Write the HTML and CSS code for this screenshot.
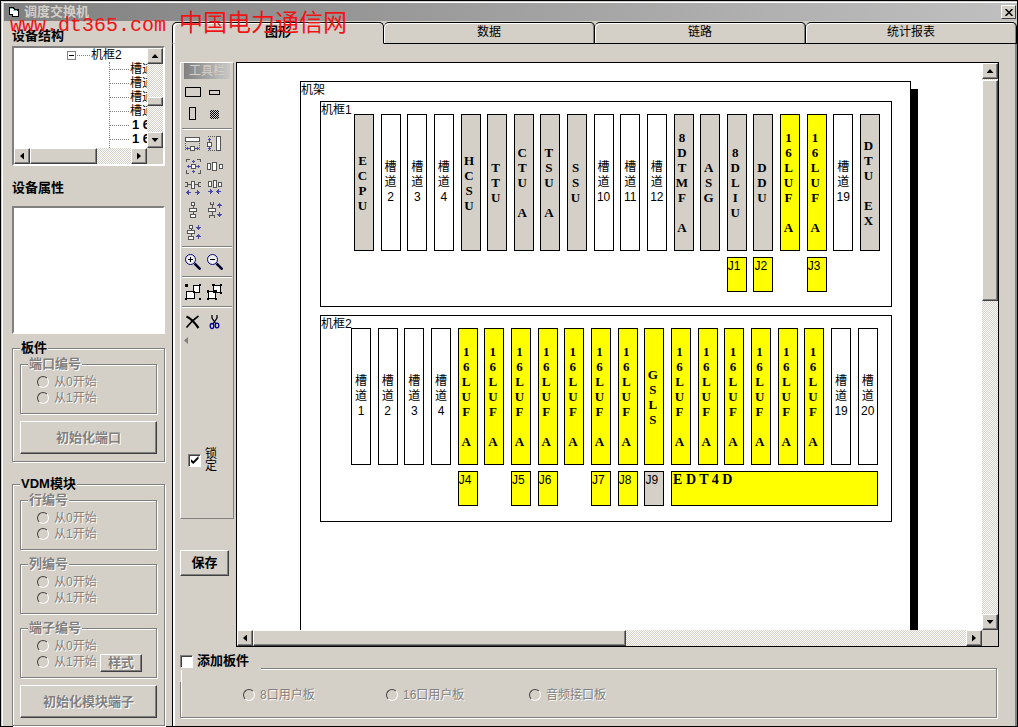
FILE: index.html
```html
<!DOCTYPE html>
<html lang="zh-CN">
<head>
<meta charset="utf-8">
<title>调度交换机</title>
<link rel="stylesheet" href="styles.css">
</head>
<body>
<div class="window">
  <header class="titlebar">
    <svg class="app-icon" viewBox="0 0 12 12" shape-rendering="crispEdges"><path d="M1 1h5v1h1v1h4v8H4V9H1z" fill="#000"/><path d="M2 3h4v5H2zM5 5h5v5H5z" fill="#fff"/><path d="M2 2h3v1H2zM5 4h4v1H5z" fill="#7fc4c4"/></svg>
    <h1 class="title">调度交换机</h1>
    <button class="close" type="button" aria-label="关闭"><svg width="8" height="7" viewBox="0 0 8 7"><path d="M.5 0l7 7M7.500 0l-7 7" stroke="#000" stroke-width="1.500"/></svg></button>
  </header>
  <p class="watermark"><span>www.dt365.com</span><span class="watermark-cn">中国电力通信网</span></p>

  <div class="body">
    <aside class="sidebar">
      <h2 class="heading">设备结构</h2>
      <div class="tree">
        <div class="tree-view">
          <div class="tree-root"><span class="toggle"></span><span class="dots"></span><span>机框2</span></div>
          <ul class="tree-list">
            <li>槽道1</li><li>槽道2</li><li>槽道3</li><li>槽道4</li>
            <li class="card">1 6 L U F</li><li class="card">1 6 L U F</li><li class="card">1 6 L U F</li>
          </ul>
        </div>
        <div class="vbar"><button class="arrow up" type="button" aria-label="向上"></button><div class="thumb tree-vthumb"></div><button class="arrow down" type="button" aria-label="向下"></button></div>
        <div class="hbar"><button class="arrow left" type="button" aria-label="向左"></button><div class="thumb tree-hthumb"></div><button class="arrow right" type="button" aria-label="向右"></button></div>
      </div>
      <h2 class="heading heading-props">设备属性</h2>
      <div class="props"></div>

      <fieldset class="group">
        <legend>板件</legend>
        <fieldset class="subgroup" disabled>
          <legend>端口编号</legend>
          <label class="radio"><input type="radio" name="port">从0开始</label>
          <label class="radio"><input type="radio" name="port">从1开始</label>
        </fieldset>
        <button class="button wide" type="button" disabled>初始化端口</button>
      </fieldset>

      <fieldset class="group group-vdm">
        <legend>VDM模块</legend>
        <fieldset class="subgroup" disabled>
          <legend>行编号</legend>
          <label class="radio"><input type="radio" name="row">从0开始</label>
          <label class="radio"><input type="radio" name="row">从1开始</label>
        </fieldset>
        <fieldset class="subgroup" disabled>
          <legend>列编号</legend>
          <label class="radio"><input type="radio" name="col">从0开始</label>
          <label class="radio"><input type="radio" name="col">从1开始</label>
        </fieldset>
        <fieldset class="subgroup" disabled>
          <legend>端子编号</legend>
          <label class="radio"><input type="radio" name="term">从0开始</label>
          <div class="radio-row">
            <label class="radio"><input type="radio" name="term">从1开始</label>
            <button class="button small" type="button">样式</button>
          </div>
        </fieldset>
        <button class="button wide" type="button" disabled>初始化模块端子</button>
      </fieldset>
    </aside>

    <main class="main">
      <div class="tabs" role="tablist">
        <button class="tab active" type="button" role="tab" aria-selected="true">图形</button>
        <button class="tab" type="button" role="tab">数据</button>
        <button class="tab" type="button" role="tab">链路</button>
        <button class="tab" type="button" role="tab">统计报表</button>
      </div>
      <div class="panel">
        <div class="work">
          <div class="tools-column">
            <div class="toolbar">
              <div class="toolbar-title">工具栏</div>
              <div class="tools">
                <button class="tool" type="button" aria-label="大矩形"><svg viewBox="0 0 16 16"><path class="k" d="M.5 3.500h15v9H.5z"/></svg></button>
                <button class="tool" type="button" aria-label="小矩形"><svg viewBox="0 0 16 16"><path class="k" d="M2.500 6.500h10v4h-10z"/></svg></button>
                <button class="tool" type="button" aria-label="竖矩形"><svg viewBox="0 0 16 16"><path class="k" d="M4.500 1.500h6v12h-6z"/></svg></button>
                <button class="tool" type="button" aria-label="填充"><svg viewBox="0 0 16 16"><defs><pattern id="chk" width="2" height="2" patternUnits="userSpaceOnUse"><path d="M0 0h1v1H0zM1 1h1v1H1z" fill="#000"/></pattern></defs><path d="M3 4h9v9H3z" fill="url(#chk)"/></svg></button>
              </div>
              <hr class="sep">
              <div class="tools">
                <button class="tool" type="button" aria-label="水平对齐"><svg viewBox="0 0 16 16"><path class="g w" d="M.5 1.500h14v4H.5zM5.500 10.500h4v4h-4z"/><path class="g d" d="M.5 7v8M14.500 7v8"/><path class="b" d="M1 12.500h4M2.500 11v3M10 12.500h4M12.500 11v3"/></svg></button>
                <button class="tool" type="button" aria-label="垂直对齐"><svg viewBox="0 0 16 16"><path class="g w" d="M9.500 .5h4v14h-4zM.5 6.500h4v4h-4z"/><path class="g d" d="M1 .5h8M1 14.500h8"/><path class="b" d="M2.500 2v4M1 3.500h3M2.500 11v3M1 12.500h3"/></svg></button>
                <button class="tool" type="button" aria-label="居中"><svg viewBox="0 0 16 16"><path class="g" d="M1.500 4V1.500h3M12 1.500h3V4M15.500 12v3.500h-3M4 15.500H1.500V12"/><path class="g w" d="M6.500 6.500h4v4h-4z"/><path class="b" d="M8.500 2v3M7 3.500h3M8.500 12v3M7 13.500h3M2 8.500h4M3.500 7v3M11 8.500h4M13.500 7v3"/></svg></button>
                <button class="tool" type="button" aria-label="等距"><svg viewBox="0 0 16 16"><path class="g w" d="M.5 5.500h3v6h-3zM5.500 4.500h4v8h-4zM12.500 6.500h3v4h-3z"/></svg></button>
                <button class="tool" type="button" aria-label="增加水平间距"><svg viewBox="0 0 16 16"><path class="g" d="M0 2.500h2.500v4H0M3 4.500h3M10 4.500h3M16 2.500h-2.500v4H16"/><path class="g w" d="M6.500 1.500h3v7h-3z"/><path class="b" d="M1 12.500h5M3.500 10v5M2.500 11v3M10 12.500h5M12.500 10v5M13.500 11v3"/></svg></button>
                <button class="tool" type="button" aria-label="减少水平间距"><svg viewBox="0 0 16 16"><path class="g w" d="M1.500 1.500h3v5h-3zM6.500 .5h3v7h-3zM11.500 2.500h3v4h-3z"/><path class="b" d="M1 11.500h5M3.500 9v5M4.500 10v3M9 11.500h5M11.500 9v5M10.500 10v3"/></svg></button>
                <button class="tool" type="button" aria-label="垂直等距"><svg viewBox="0 0 16 16"><path class="g" d="M8.500 3v9"/><path class="g w" d="M6.500 .5h3v3h-3zM4.500 6.500h7v3h-7zM5.500 12.500h5v3h-5z"/></svg></button>
                <button class="tool" type="button" aria-label="增加垂直间距"><svg viewBox="0 0 16 16"><path class="g" d="M3.500 0v2.500h3V0M5.500 3v10M2.500 16v-2.500h5V16"/><path class="g w" d="M1.500 6.500h7v3h-7z"/><path class="b" d="M12.500 1v5M10 3.500h5M11 2.500h3M12.500 10v5M10 12.500h5M11 13.500h3"/></svg></button>
                <button class="tool" type="button" aria-label="减少垂直间距"><svg viewBox="0 0 16 16"><path class="g" d="M6.500 4v8"/><path class="g w" d="M4.500 1.500h3v3h-3zM2.500 6.500h7v3h-7zM3.500 12.500h5v3h-5z"/><path class="b" d="M13.500 1v5M11 3.500h5M12 4.500h3M13.500 10v5M11 12.500h5M12 11.500h3"/></svg></button>
              </div>
              <hr class="sep">
              <div class="tools">
                <button class="tool" type="button" aria-label="放大"><svg class="smooth" viewBox="0 0 16 16"><circle cx="5.500" cy="5.500" r="5" fill="#eee" stroke="#000080"/><path d="M5.500 3v5M3 5.500h5" stroke="#000"/><path d="M9.500 9.500l6 6" stroke="#000030" stroke-width="2.500"/></svg></button>
                <button class="tool" type="button" aria-label="缩小"><svg class="smooth" viewBox="0 0 16 16"><circle cx="5.500" cy="5.500" r="5" fill="#eee" stroke="#000080"/><path d="M3 5.500h5" stroke="#000"/><path d="M9.500 9.500l6 6" stroke="#000030" stroke-width="2.500"/></svg></button>
              </div>
              <hr class="sep">
              <div class="tools">
                <button class="tool" type="button" aria-label="组合"><svg viewBox="0 0 16 16"><path class="k w" d="M8.500 1.500h6v7h-6zM1.500 7.500h8v7h-8z"/><path d="M0 0h3v3H0zM14 0h2v2h-2zM0 14h2v2H0zM14 14h2v2h-2z" fill="#000"/></svg></button>
                <button class="tool" type="button" aria-label="取消组合"><svg viewBox="0 0 16 16"><path class="k w" d="M6.500 1.500h7v7h-7zM1.500 7.500h7v7h-7z"/><path d="M5 0h3v2H5zM13 0h2v2h-2zM13 8h2v2h-2zM0 6h2v3H0zM0 14h2v2H0zM8 14h2v2H8zM7 6h3v2H7z" fill="#000"/></svg></button>
              </div>
              <hr class="sep">
              <div class="tools">
                <button class="tool" type="button" aria-label="删除"><svg class="smooth" viewBox="0 0 16 16"><path d="M1.500 2.500C5 4 10 9 13.500 14" stroke="#000" stroke-width="2.200" fill="none"/><path d="M13.500 2C9 5 5 9 1.500 13.500" stroke="#000" stroke-width="1.600" fill="none"/></svg></button>
                <button class="tool" type="button" aria-label="剪切"><svg class="smooth" viewBox="0 0 16 16"><path d="M5 1v3l4 6M10 1v3L6 10" stroke="#000" stroke-width="1.300" fill="none"/><ellipse cx="5" cy="12" rx="1.800" ry="2.500" fill="none" stroke="#000090" stroke-width="1.300"/><ellipse cx="10" cy="11.500" rx="1.800" ry="2.300" fill="none" stroke="#000090" stroke-width="1.300"/></svg></button>
              </div>
              <div class="collapse"></div>
              <label class="lock"><input class="check" type="checkbox" checked><span>锁<br>定</span></label>
            </div>
            <button class="button save" type="button">保存</button>
          </div>

          <div class="viewer">
            <div class="canvas">
              <section class="rack">
                <h3 class="rack-name">机架</h3>
                <div class="shelf shelf-one">
                  <h4 class="shelf-name">机框1</h4>
                  <div class="slots">
                    <div class="slot idle">E<br>C<br>P<br>U</div>
                    <div class="slot">槽<br>道<br>2</div>
                    <div class="slot">槽<br>道<br>3</div>
                    <div class="slot">槽<br>道<br>4</div>
                    <div class="slot idle">H<br>C<br>S<br>U</div>
                    <div class="slot idle">T<br>T<br>U</div>
                    <div class="slot idle">C<br>T<br>U<br><br>A</div>
                    <div class="slot idle">T<br>S<br>U<br><br>A</div>
                    <div class="slot idle">S<br>S<br>U</div>
                    <div class="slot">槽<br>道<br>10</div>
                    <div class="slot">槽<br>道<br>11</div>
                    <div class="slot">槽<br>道<br>12</div>
                    <div class="slot idle">8<br>D<br>T<br>M<br>F<br><br>A</div>
                    <div class="slot idle">A<br>S<br>G</div>
                    <div class="slot idle">8<br>D<br>L<br>I<br>U</div>
                    <div class="slot idle">D<br>D<br>U</div>
                    <div class="slot used">1<br>6<br>L<br>U<br>F<br><br>A</div>
                    <div class="slot used">1<br>6<br>L<br>U<br>F<br><br>A</div>
                    <div class="slot">槽<br>道<br>19</div>
                    <div class="slot idle">D<br>T<br>U<br><br>E<br>X</div>
                    <div class="port at-15">J1</div>
                    <div class="port at-16">J2</div>
                    <div class="port at-18">J3</div>
                  </div>
                </div>
                <div class="shelf shelf-two">
                  <h4 class="shelf-name">机框2</h4>
                  <div class="slots">
                    <div class="slot">槽<br>道<br>1</div>
                    <div class="slot">槽<br>道<br>2</div>
                    <div class="slot">槽<br>道<br>3</div>
                    <div class="slot">槽<br>道<br>4</div>
                    <div class="slot used">1<br>6<br>L<br>U<br>F<br><br>A</div>
                    <div class="slot used">1<br>6<br>L<br>U<br>F<br><br>A</div>
                    <div class="slot used">1<br>6<br>L<br>U<br>F<br><br>A</div>
                    <div class="slot used">1<br>6<br>L<br>U<br>F<br><br>A</div>
                    <div class="slot used">1<br>6<br>L<br>U<br>F<br><br>A</div>
                    <div class="slot used">1<br>6<br>L<br>U<br>F<br><br>A</div>
                    <div class="slot used">1<br>6<br>L<br>U<br>F<br><br>A</div>
                    <div class="slot used">G<br>S<br>L<br>S</div>
                    <div class="slot used">1<br>6<br>L<br>U<br>F<br><br>A</div>
                    <div class="slot used">1<br>6<br>L<br>U<br>F<br><br>A</div>
                    <div class="slot used">1<br>6<br>L<br>U<br>F<br><br>A</div>
                    <div class="slot used">1<br>6<br>L<br>U<br>F<br><br>A</div>
                    <div class="slot used">1<br>6<br>L<br>U<br>F<br><br>A</div>
                    <div class="slot used">1<br>6<br>L<br>U<br>F<br><br>A</div>
                    <div class="slot">槽<br>道<br>19</div>
                    <div class="slot">槽<br>道<br>20</div>
                    <div class="port at-5">J4</div>
                    <div class="port at-7">J5</div>
                    <div class="port at-8">J6</div>
                    <div class="port at-10">J7</div>
                    <div class="port at-11">J8</div>
                    <div class="port port-idle at-12">J9</div>
                    <div class="port port-wide">E D T 4 D</div>
                  </div>
                </div>
              </section>
            </div>
            <div class="vbar"><button class="arrow up" type="button" aria-label="向上"></button><div class="thumb canvas-vthumb"></div><button class="arrow down" type="button" aria-label="向下"></button></div>
            <div class="hbar"><button class="arrow left" type="button" aria-label="向左"></button><div class="thumb canvas-hthumb"></div><button class="arrow right" type="button" aria-label="向右"></button></div>
          </div>
        </div>

        <fieldset class="add">
          <legend><label class="add-label"><input class="check" type="checkbox">添加板件</label></legend>
          <div class="add-options">
            <label class="radio"><input type="radio" name="card" disabled>8口用户板</label>
            <label class="radio"><input type="radio" name="card" disabled>16口用户板</label>
            <label class="radio"><input type="radio" name="card" disabled>音频接口板</label>
          </div>
        </fieldset>
      </div>
    </main>
  </div>
</div>
</body>
</html>
```
FILE: styles.css
```css
:root {
  --face: #d4d0c8;
  --shade: #808080;
  --dark: #404040;
}

* { box-sizing: border-box; }

body {
  margin: 0;
  font: 12px/16px "Liberation Sans", "Noto Sans CJK SC", sans-serif;
  color: #000;
  background: var(--face);
}

h1, h2, h3, h4, p, ul { margin: 0; padding: 0; font-weight: normal; }
ul { list-style: none; }
button, input { margin: 0; font: inherit; color: inherit; }
button { padding: 0; border: 0; background: none; }
fieldset { margin: 0; min-width: 0; }
svg { display: block; }

.window {
  position: relative;
  display: flex;
  flex-direction: column;
  min-height: 100vh;
  padding: 2px 0 0 3px;
  border: 1px solid #000;
  background: var(--face);
  box-shadow: inset 1px 1px 0 var(--face), inset 2px 2px 0 #fff;
}

.titlebar {
  display: flex;
  align-items: center;
  gap: 4px;
  height: 18px;
  padding: 0 1px 0 4px;
  background: linear-gradient(to right, #808080, #c0c0c0);
}
.app-icon { width: 12px; height: 12px; }
.title { font-size: 13px; font-weight: bold; line-height: 18px; color: var(--face); }
.close {
  display: grid;
  place-items: center;
  width: 15px;
  height: 14px;
  margin-left: auto;
  background: var(--face);
  border: 1px solid;
  border-color: #fff var(--dark) var(--dark) #fff;
}

.watermark {
  position: absolute;
  top: 6px;
  left: 9px;
  z-index: 2;
  display: flex;
  align-items: baseline;
  gap: 13px;
  font: 20px/28px "Liberation Mono", monospace;
  color: #f01414;
  pointer-events: none;
}
.watermark-cn { font-family: "Noto Sans CJK SC", sans-serif; font-size: 24px; }

.body { display: flex; flex: 1; }

/* Sidebar */
.sidebar { flex: none; width: 168px; padding: 7px 7px 0 8px; }
.heading { margin-bottom: 2px; font-size: 13px; font-weight: bold; line-height: 16px; }
.heading-props { margin: 14px 0 10px; }

.tree, .props {
  border: 2px solid;
  border-color: var(--shade) #fff #fff var(--shade);
  background: #fff;
}
.props { height: 128px; }
.tree, .viewer {
  display: grid;
  grid-template-columns: minmax(0, 1fr) 16px;
  grid-template-rows: minmax(0, 1fr) 16px;
}
.tree { height: 120px; background: linear-gradient(var(--face), var(--face)) right bottom / 16px 16px no-repeat #fff; }
.tree-view { overflow: hidden; line-height: 14px; white-space: nowrap; }
.tree-root { display: flex; align-items: center; padding-left: 53px; height: 14px; }
.toggle {
  display: grid;
  place-items: center;
  width: 9px;
  height: 9px;
  border: 1px solid var(--shade);
}
.toggle::before { content: ""; width: 5px; height: 1px; background: #000; }
.dots { width: 13px; margin: 0 1px; border-top: 1px dotted var(--shade); }
.tree-list { margin-left: 95px; border-left: 1px dotted var(--shade); }
.tree-list li { display: flex; align-items: center; gap: 1px; height: 14px; }
.tree-list li::before { content: ""; flex: none; width: 19px; border-top: 1px dotted var(--shade); }
.tree-list .card { gap: 3px; font-size: 13px; font-weight: bold; }

/* Scroll bars */
.vbar, .hbar {
  display: flex;
  background: conic-gradient(#fff 25%, var(--face) 0 50%, #fff 0 75%, var(--face) 0) 0 0 / 2px 2px;
}
.vbar { flex-direction: column; }
.arrow, .thumb, .button {
  background: var(--face);
  border: 1px solid;
  border-color: #fff var(--dark) var(--dark) #fff;
  box-shadow: inset -1px -1px 0 var(--shade);
}
.arrow { display: grid; place-items: center; flex: none; width: 16px; height: 16px; }
.arrow::before { content: ""; width: 7px; height: 4px; background: #000; clip-path: polygon(50% 0, 100% 100%, 0 100%); }
.arrow.down::before { clip-path: polygon(0 0, 100% 0, 50% 100%); }
.arrow.left::before { width: 4px; height: 7px; clip-path: polygon(100% 0, 100% 100%, 0 50%); }
.arrow.right::before { width: 4px; height: 7px; clip-path: polygon(0 0, 100% 50%, 0 100%); }
.arrow.down { margin-top: auto; }
.arrow.right { margin-left: auto; }
.tree-vthumb { height: 9px; margin-top: 33px; }
.tree-hthumb { width: 67px; }
.canvas-vthumb { height: 39%; margin-top: 1px; }
.canvas-hthumb { width: 50%; }

/* Group boxes and controls */
.group, .subgroup, .add {
  border: 1px solid var(--shade);
  box-shadow: 1px 1px 0 #fff, inset 1px 1px 0 #fff;
}
.group { margin-top: 7px; padding: 2px 7px 7px; }
.group-vdm { margin-top: 15px; }
legend { padding: 0 1px; font-size: 13px; font-weight: bold; line-height: 14px; background: var(--face); }
.subgroup { margin-bottom: 7px; padding: 3px 14px 7px 7px; }
.subgroup, .subgroup .button, .button:disabled, .add-options { color: var(--shade); text-shadow: 1px 1px 0 #fff; }
.subgroup .radio { padding-left: 9px; }
.radio { display: flex; align-items: center; gap: 5px; height: 16px; white-space: nowrap; }
.radio input {
  appearance: none;
  flex: none;
  width: 12px;
  height: 12px;
  border: 1px solid;
  border-color: var(--dark) #fff #fff var(--dark);
  border-radius: 50%;
}
.radio-row { display: flex; justify-content: space-between; height: 16px; }
.button { font-size: 13px; font-weight: bold; white-space: nowrap; }
.wide { display: block; width: 100%; height: 33px; }
.small { flex: none; width: 42px; height: 18px; line-height: 14px; }
.save { width: 49px; height: 26px; }

.check {
  appearance: none;
  display: grid;
  place-items: center;
  flex: none;
  width: 13px;
  height: 13px;
  background: #fff;
  border: 1px solid;
  border-color: var(--shade) #fff #fff var(--shade);
  box-shadow: inset 1px 1px 0 var(--dark);
}
.check:checked::before {
  content: "";
  width: 8px;
  height: 8px;
  background: #000;
  clip-path: polygon(0 35%, 35% 65%, 100% 0, 100% 35%, 35% 100%, 0 70%);
}

/* Tabs */
.main { display: flex; flex: 1; flex-direction: column; min-width: 0; padding-top: 1px; }
.tabs { display: flex; }
.tab {
  flex: 1;
  height: 22px;
  padding-bottom: 2px;
  border: 1px solid #000;
  border-left-width: 0;
  border-radius: 5px 5px 0 0;
  background: var(--face);
  box-shadow: inset 1px 1px 0 #fff, inset -1px 0 0 var(--shade);
}
.tab.active {
  border-left-width: 1px;
  border-bottom-color: var(--face);
  font-size: 13px;
  font-weight: bold;
  box-shadow: inset 2px 1px 0 #fff;
}
.panel {
  display: flex;
  flex: 1;
  flex-direction: column;
  padding: 18px 18px 8px 7px;
  border-left: 1px solid #000;
  box-shadow: inset 2px 0 0 #fff, inset -2px 0 0 var(--shade);
}
.work { display: flex; flex: 1; gap: 2px; }

/* Tool palette */
.tools-column { display: flex; flex: none; flex-direction: column; align-items: flex-start; gap: 31px; width: 54px; }
.toolbar {
  width: 54px;
  padding: 0 1px 46px;
  border: 1px solid;
  border-color: #fff var(--shade) var(--shade) #fff;
}
.toolbar-title {
  height: 16px;
  margin: 0 2px 2px;
  text-align: center;
  color: var(--face);
  background: linear-gradient(to right, #808080, #c8c8c8);
}
.tools { display: grid; grid-template-columns: repeat(2, 22px); grid-auto-rows: 22px; }
.tool { display: grid; place-items: center; }
.tool svg { width: 16px; height: 16px; shape-rendering: crispEdges; }
.tool .smooth { shape-rendering: auto; }
.k { fill: none; stroke: #000; }
.g { fill: none; stroke: #555; }
.b { fill: none; stroke: #4a48a8; }
.w { fill: #fff; }
.d { stroke-dasharray: 1 1; }
.sep { height: 2px; margin: 3px 0; border: 0; border-top: 1px solid var(--shade); border-bottom: 1px solid #fff; }
.collapse { width: 4px; height: 7px; margin: 4px 0 0 2px; background: var(--shade); clip-path: polygon(100% 0, 100% 100%, 0 50%); }
.lock { display: flex; align-items: center; gap: 4px; margin-top: 104px; padding-left: 6px; line-height: 12px; }

/* Drawing canvas */
.viewer { flex: 1; min-width: 0; border: 1px solid #000; background: linear-gradient(var(--face), var(--face)) right bottom / 16px 16px no-repeat #fff; }
.canvas { position: relative; overflow: hidden; }
.rack {
  position: absolute;
  top: 18px;
  bottom: -60px;
  left: 63px;
  width: 611px;
  border: 1px solid #000;
  background: #fff;
  box-shadow: 7px 8px 0 #000;
}
.rack-name { height: 19px; font-size: 12px; }
.shelf { display: flex; margin: 0 18px 8px 19px; border: 1px solid #000; }
.shelf-one { padding: 0 11px 14px 0; }
.shelf-two { padding: 0 13px 15px 0; }
.shelf-name { flex: none; width: 33px; font-size: 12px; white-space: nowrap; }
.shelf-two .shelf-name { width: 30px; }
.slots {
  display: grid;
  flex: 1;
  grid-template-columns: repeat(20, 20px);
  grid-template-rows: 137px 35px;
  justify-content: space-between;
  row-gap: 6px;
  padding-top: 12px;
}
.slot {
  display: grid;
  place-content: center;
  border: 1px solid #000;
  line-height: 15px;
  text-align: center;
}
.idle, .used { padding-right: 3px; font-family: "Liberation Serif", serif; font-size: 13px; font-weight: bold; }
.idle { background: var(--face); }
.used { background: #ff0; }
.port { grid-row: 2; border: 1px solid #000; background: #ff0; }
.port-idle { background: var(--face); }
.port-wide { grid-column: 13 / 21; padding-left: 1px; font-family: "Liberation Serif", serif; font-size: 14px; font-weight: bold; }
.at-5 { grid-column: 5; }
.at-7 { grid-column: 7; }
.at-8 { grid-column: 8; }
.at-10 { grid-column: 10; }
.at-11 { grid-column: 11; }
.at-12 { grid-column: 12; }
.at-15 { grid-column: 15; }
.at-16 { grid-column: 16; }
.at-18 { grid-column: 18; }

/* Add-card box */
.add { margin: 7px 2px 0 0; padding: 5px 0 14px 62px; }
.add legend {
  width: 81px;
  height: 28px;
  margin-left: -63px;
  padding: 0;
  background: linear-gradient(var(--face) 16px, transparent 0);
}
.add-label { display: flex; align-items: center; gap: 4px; }
.add-options { display: grid; grid-template-columns: repeat(3, 143px); }
```
